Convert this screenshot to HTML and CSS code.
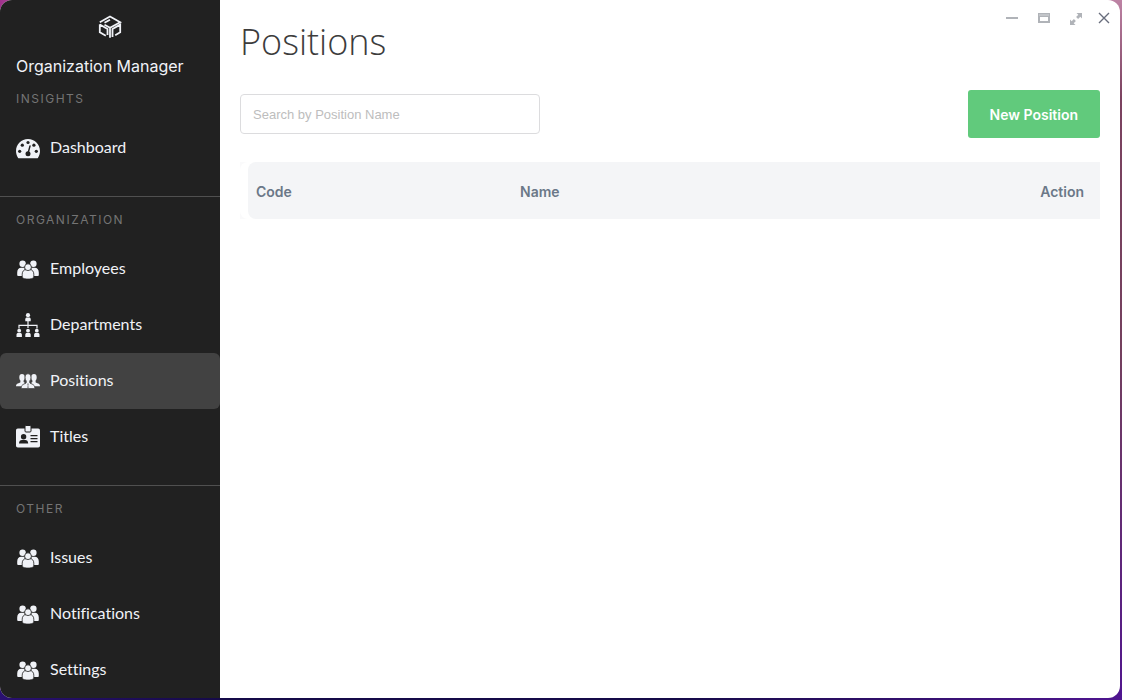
FILE: index.html
```html
<!DOCTYPE html>
<html lang="en">
<head>
<meta charset="utf-8">
<title>Organization Manager</title>
<link rel="stylesheet" href="styles.css">
</head>
<body>
<svg class="defs" aria-hidden="true">
  <symbol id="people" viewBox="0 0 24 24">
    <g fill="currentColor">
      <circle cx="6.600" cy="6.700" r="3.200"/><circle cx="17.400" cy="6.700" r="3.200"/>
      <path d="M1.200 18.600v-3.200c0-3 1.700-4.700 4-4.700h3.400V19H3c-1 0-1.800 0-1.800-.4zM22.800 18.600v-3.200c0-3-1.700-4.700-4-4.700h-3.400V19H21c1 0 1.800 0 1.800-.4z"/>
    </g>
    <g fill="currentColor" stroke="#212121" stroke-width=".8">
      <path d="M6.200 20.400v-3.200c0-2.900 1.700-4.600 4-4.600h3.600c2.300 0 4 1.700 4 4.600v3.200c-1 1.100-3.200 1.700-5.800 1.700s-4.800-.6-5.800-1.700z"/>
      <circle cx="12" cy="10.200" r="3.400"/>
    </g>
  </symbol>
</svg>
<div class="window">
  <aside class="sidebar">
    <header class="brand">
      <svg class="logo" viewBox="0 0 24 24" fill="none" stroke="currentColor" stroke-width="1.800" aria-hidden="true">
        <path d="M1.800 7.200 12 1.500l10.200 5.700L12 12.800 6.500 9.800M6.500 7.800l5.500-3M1.800 9.300v8l6 3.500M1.800 9.500 9.500 14v6M12 12.800v10M14.500 22v-8l7.700-4.400v7.700l-5 2.900"/>
      </svg>
      <span class="brand-name">Organization Manager</span>
    </header>
    <nav>
      <section class="group">
        <h2 class="label">INSIGHTS</h2>
        <a class="item" href="#dashboard">
          <svg class="icon" viewBox="0 0 24 24" aria-hidden="true">
            <path fill="currentColor" d="M2 21.800C.7 19.800 0 17.400 0 15 0 8.400 5.400 3 12 3s12 5.400 12 12c0 2.400-.7 4.800-2 6.800-.2.400-.6.500-1 .5H3c-.4 0-.8-.1-1-.5z"/>
            <g fill="#212121"><circle cx="3.700" cy="15.300" r="1.600"/><circle cx="6.300" cy="9.200" r="1.600"/><circle cx="12" cy="6.500" r="1.600"/><circle cx="17.900" cy="9.200" r="1.600"/><circle cx="20.300" cy="15.300" r="1.600"/><circle cx="12" cy="17.800" r="2.500"/></g>
            <path d="m12 17.500 2-7.500" stroke="#212121" stroke-width="1.400" stroke-linecap="round"/>
          </svg><span class="item-text">Dashboard</span></a>
      </section>
      <section class="group">
        <h2 class="label">ORGANIZATION</h2>
        <a class="item" href="#employees"><svg class="icon" aria-hidden="true"><use href="#people"/></svg><span class="item-text">Employees</span></a>
        <a class="item" href="#departments">
          <svg class="icon" viewBox="0 0 24 24" fill="currentColor" aria-hidden="true">
            <circle cx="12" cy="2.200" r="2.100"/><path d="M9.300 8.300V6.200c0-1.200.6-1.800 1.700-1.800h2c1.100 0 1.700.6 1.700 1.800v2.100z"/>
            <path d="M12 8v7M3 15.500v-3.200h18v3.200" fill="none" stroke="currentColor" stroke-width="1.200"/>
            <circle cx="3.200" cy="17.700" r="1.900"/><circle cx="12" cy="17.700" r="1.900"/><circle cx="20.800" cy="17.700" r="1.900"/>
            <path d="M.5 24v-2.300c0-1.200.6-1.800 1.700-1.800h2c1.100 0 1.700.6 1.700 1.800V24zM9.300 24v-2.300c0-1.200.6-1.800 1.700-1.800h2c1.100 0 1.700.6 1.700 1.800V24zM18.100 24v-2.300c0-1.200.6-1.800 1.700-1.800h2c1.100 0 1.700.6 1.700 1.800V24z"/>
          </svg><span class="item-text">Departments</span></a>
        <a class="item active" href="#positions" aria-current="page">
          <svg class="icon" viewBox="0 0 24 24" fill="currentColor" aria-hidden="true">
            <path d="M3.300 8.200C3.300 6.200 4.300 5 6 5s2.700 1.200 2.700 3.200c0 1.400-.4 2.600-1.100 3.400v1.500l1.400 1-3.500 3.200H0c0-1.900.7-2.500 2-2.900 1.500-.4 2.400-.7 2.400-1.400v-1.400c-.7-.8-1.100-2-1.100-3.400zM20.700 8.200C20.700 6.200 19.700 5 18 5s-2.700 1.200-2.700 3.200c0 1.400.4 2.600 1.100 3.400v1.500l-1.400 1 3.500 3.200H24c0-1.900-.7-2.500-2-2.900-1.500-.4-2.400-.7-2.400-1.400v-1.400c.7-.8 1.100-2 1.100-3.400z"/>
            <path stroke="#424242" stroke-width=".7" d="M9.100 8.400C9.100 6.200 10.200 4.800 12 4.800s2.900 1.400 2.900 3.600c0 1.500-.4 2.700-1.200 3.600v1.500c0 .8 1 1.100 2.200 1.500 1.800.5 2.900 1.700 2.900 4.500H5.200c0-2.800 1.100-4 2.900-4.500 1.200-.4 2.200-.7 2.200-1.500V12c-.8-.9-1.200-2.100-1.200-3.600z"/>
            <path d="m12 14-1.100 1.300.7.800-.6 3h2l-.6-3 .7-.8z" fill="#9c9c9f"/>
          </svg><span class="item-text">Positions</span></a>
        <a class="item" href="#titles">
          <svg class="icon" viewBox="0 0 24 24" aria-hidden="true">
            <rect y="3.500" width="24" height="19" rx="1.800" fill="currentColor"/>
            <rect x="9" y=".5" width="6" height="6.500" rx="1" fill="currentColor" stroke="#212121" stroke-width="1"/>
            <g fill="#212121"><circle cx="7.600" cy="11.700" r="2.700"/><path d="M3 18.600c0-2.400 1.300-3.500 3-3.500h3.200c1.700 0 3 1.100 3 3.500zM14.500 10h7v1.300h-7zM14.500 13h7v1.300h-7zM14.500 16h7v1.300h-7z"/></g>
          </svg><span class="item-text">Titles</span></a>
      </section>
      <section class="group">
        <h2 class="label">OTHER</h2>
        <a class="item" href="#issues"><svg class="icon" aria-hidden="true"><use href="#people"/></svg><span class="item-text">Issues</span></a>
        <a class="item" href="#notifications"><svg class="icon" aria-hidden="true"><use href="#people"/></svg><span class="item-text">Notifications</span></a>
        <a class="item" href="#settings"><svg class="icon" aria-hidden="true"><use href="#people"/></svg><span class="item-text">Settings</span></a>
      </section>
    </nav>
  </aside>
  <main class="content">
    <div class="controls">
      <button type="button" aria-label="Minimize"><svg viewBox="0 0 16 16" fill="none" stroke="#b0b3b8" stroke-width="2"><path d="M2 8h12"/></svg></button>
      <button type="button" aria-label="Restore"><svg viewBox="0 0 16 16"><path fill="#b0b3b8" fill-rule="evenodd" d="M2 3h12v10H2zM4 7v4h8V7z"/><path d="M3 5h10" stroke="#d5d7da"/></svg></button>
      <button type="button" aria-label="Maximize"><svg viewBox="0 0 16 16" fill="#b0b3b8"><path d="M8.500 3H14v5.500l-1.700-1.700-2.200 2.200-2-2 2.200-2.200zM7.500 15H2V9.500l1.700 1.700L5.900 9l2 2-2.200 2.200z"/></svg></button>
      <button type="button" aria-label="Close"><svg viewBox="0 0 16 16" fill="none" stroke="#686d7c" stroke-width="1.400"><path d="m3 3 10 10M13 3 3 13"/></svg></button>
    </div>
    <h1 class="title">Positions</h1>
    <div class="toolbar">
      <input class="search" type="text" placeholder="Search by Position Name" aria-label="Search by Position Name">
      <button class="primary" type="button">New Position</button>
    </div>
    <table class="grid">
      <thead>
        <tr><td class="edge"><div class="edge-fill"></div></td><th class="code" scope="col">Code</th><th scope="col">Name</th><th class="action" scope="col">Action</th></tr>
      </thead>
    </table>
  </main>
</div>
</body>
</html>
```
FILE: styles.css
```css
* { box-sizing: border-box; }
body {
  margin: 0;
  height: 100vh;
  padding: 0 2px 2px 0;
  overflow: hidden;
  background:
    linear-gradient(90deg, #a0308c, transparent 40px) top / 100% 50% no-repeat,
    linear-gradient(90deg, #2a1070, #150a48 20%, #150a48 60%, #4f1590) bottom / 100% 10px no-repeat,
    linear-gradient(#bd82a4, #7b4260 14%, #74405e 50%, #51158e);
  font-family: Inter, "Liberation Sans", sans-serif;
}
.defs { display: none; }
.window {
  display: flex;
  height: 100%;
  border-radius: 12px;
  overflow: hidden;
  background: #fff;
}
.sidebar {
  flex: 0 0 220px;
  overflow: hidden;
  background: #212121;
  color: #f0f2f7;
}
.brand {
  display: flex;
  flex-direction: column;
  gap: 16px;
  height: 76px;
  padding: 15px 16px 0;
}
.logo { width: 24px; height: 24px; align-self: center; flex: none; }
.brand-name { font-size: 16px; line-height: 22px; white-space: nowrap; }
.group { padding-bottom: 20px; border-bottom: 1px solid #505050; }
.label {
  margin: 0;
  padding: 1px 16px 0;
  color: #747474;
  font-size: 12px;
  font-weight: 400;
  line-height: 43px;
  letter-spacing: 1.5px;
}
.item {
  display: flex;
  align-items: center;
  gap: 10px;
  height: 56px;
  padding: 0 16px;
  border-radius: 6px;
  color: inherit;
  font-family: Lato, sans-serif;
  font-size: 16px;
  font-variant-ligatures: none;
  text-decoration: none;
}
.item-text { padding-bottom: 3px; }
.active { background: #424242; }
.icon { flex: none; width: 24px; height: 24px; }
.content {
  position: relative;
  flex: 1;
  min-width: 0;
  padding: 16px 20px;
}
.controls {
  position: absolute;
  top: 10px;
  right: 8px;
  display: flex;
  gap: 16px;
}
.controls button {
  width: 16px;
  height: 16px;
  padding: 0;
  border: 0;
  background: none;
}
.controls button:last-child { margin-left: -4px; }
.controls svg { display: block; }
.title {
  margin: 0 0 22px;
  color: #3c3c3c;
  font-family: "Open Sans", sans-serif;
  font-size: 36px;
  font-weight: 300;
  line-height: 52px;
}
.toolbar {
  display: flex;
  align-items: center;
  justify-content: space-between;
  margin-bottom: 24px;
}
.search {
  width: 300px;
  height: 40px;
  padding: 0 12px;
  border: 1px solid #dcdcde;
  border-radius: 4px;
  font-family: "Liberation Sans", Arial, sans-serif;
  font-size: 13px;
}
.search::placeholder { color: #bdbdbd; opacity: 1; }
.primary {
  height: 48px;
  padding: 0 22px;
  border: 0;
  border-radius: 3px;
  background: #61ca7c;
  color: #fff;
  font: 600 14px Inter, sans-serif;
}
.grid {
  width: 100%;
  table-layout: fixed;
  border-spacing: 0;
  color: #6b7888;
}
.grid th {
  height: 57px;
  padding: 2px 16px 0 8px;
  background: #f4f5f7;
  font-size: 14px;
  font-weight: 600;
  text-align: left;
}
.grid .edge { width: 8px; padding: 0; background: #fafafb; }
.edge-fill { height: 57px; border-radius: 8px 0 0 8px; background: #fff; }
.grid .code { width: 264px; border-radius: 8px 0 0 8px; }
.grid .action { text-align: right; }
```
